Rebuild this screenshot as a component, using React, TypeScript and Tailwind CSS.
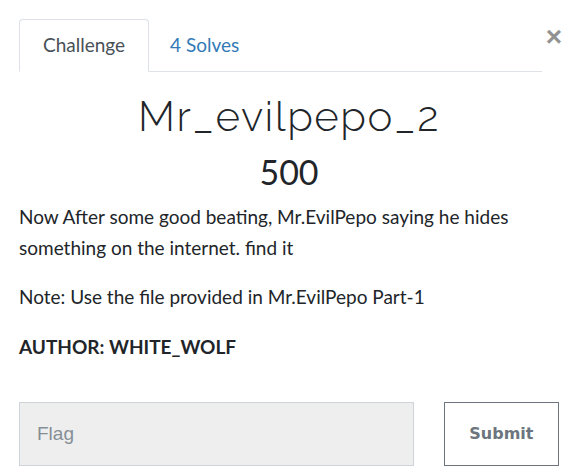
const App = () => {
  return (
    <div className="w-[578px] h-[475px] bg-white font-['Lato','Open_Sans',sans-serif] text-[#212529] overflow-hidden">
      <div className="flex items-start pt-[19px] pl-[19px] pr-[16px]">
        <div className="flex flex-1 border-b border-[#dee2e6] h-[53px]">
          <div className="w-[130px] h-[53px] -mb-px border border-[#dee2e6] border-b-white rounded-t-[4px] bg-white flex items-center justify-center text-[19px] text-[#495057]">
            Challenge
          </div>
          <div className="px-[21px] h-[52px] flex items-center text-[19px] text-[#337ab7]">
            4 Solves
          </div>
        </div>
        <button className="ml-[4px] mt-[4px] text-[28px] leading-none font-bold text-[#777] font-['Liberation_Sans',sans-serif] opacity-80">
          ×
        </button>
      </div>

      <div className="px-[19px]">
        <h3 className="mt-[20px] text-center text-[42px] leading-[50px] font-light tracking-[1.5px] text-[#212529] font-['Raleway','Lato',sans-serif]">
          Mr_evilpepo_2
        </h3>
        <h4 className="mt-[9px] text-center text-[34px] leading-[42px] font-normal text-[#212529]">
          500
        </h4>
        <div className="mt-[8px] text-[19px] leading-[31px] text-[#212529]">
          <p>Now After some good beating, Mr.EvilPepo saying he hides something on the internet. find it</p>
          <p className="mt-[18px]">Note: Use the file provided in Mr.EvilPepo Part-1</p>
          <p className="mt-[19px] font-bold">AUTHOR: WHITE_WOLF</p>
        </div>

        <div className="mt-[40px] flex items-center">
          <input
            className="w-[397px] h-[64px] bg-[#eeeeee] border border-[#ced4da] px-[17px] text-[19px] text-[#495057] placeholder:text-[#868e96] font-['Liberation_Sans',sans-serif] outline-none"
            placeholder="Flag"
          />
          <button className="ml-[30px] w-[116px] h-[64px] border border-[#6c757d] text-[16px] font-bold text-[#6c757d] bg-white font-['DejaVu_Sans',sans-serif]">
            Submit
          </button>
        </div>
      </div>
    </div>
  );
};

export default App;
